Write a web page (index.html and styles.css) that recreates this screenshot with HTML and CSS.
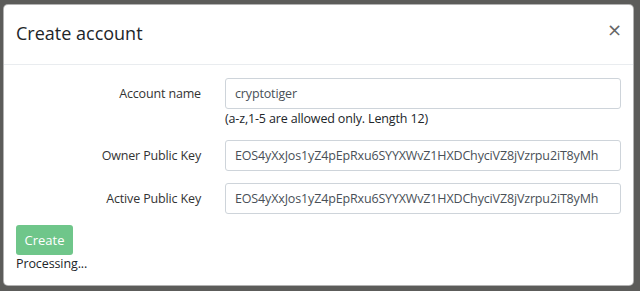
FILE: index.html
```html
<!DOCTYPE html>
<html>
<head>
<meta charset="utf-8">
<link rel="stylesheet" href="styles.css">
</head>
<body>
<div class="backdrop">
  <div class="modal">
    <div class="modal-header">
      <h5 class="modal-title">Create account</h5>
      <button class="close" type="button" aria-label="Close">×</button>
    </div>
    <div class="modal-body">
      <div class="form">
        <label class="label">Account name</label>
        <div class="field">
          <input class="input" type="text" value="cryptotiger">
          <div class="help">(a-z,1-5 are allowed only. Length 12)</div>
        </div>
        <label class="label">Owner Public Key</label>
        <div class="field">
          <input class="input" type="text" value="EOS4yXxJos1yZ4pEpRxu6SYYXWvZ1HXDChyciVZ8jVzrpu2iT8yMh">
        </div>
        <label class="label">Active Public Key</label>
        <div class="field">
          <input class="input" type="text" value="EOS4yXxJos1yZ4pEpRxu6SYYXWvZ1HXDChyciVZ8jVzrpu2iT8yMh">
        </div>
      </div>
      <button class="btn" type="button" disabled>Create</button>
      <div class="status">Processing...</div>
    </div>
  </div>
</div>
</body>
</html>
```
FILE: styles.css
```css
* { box-sizing: border-box; }
html, body { margin: 0; padding: 0; }
body {
  width: 640px;
  height: 291px;
  overflow: hidden;
  font-family: "Open Sans", "Noto Sans", sans-serif;
  color: #212529;
}
.backdrop {
  width: 640px;
  height: 291px;
  background: #5c5c5a;
  padding: 4px 0 0 3px;
}
.modal {
  width: 631px;
  height: 282px;
  background: #fff;
  border: 1px solid rgba(0,0,0,.3);
  border-radius: 5px;
  display: flex;
  flex-direction: column;
}
.modal-header {
  height: 60px;
  flex: none;
  display: flex;
  align-items: center;
  justify-content: space-between;
  padding: 0 12px 4px 12px;
  border-bottom: 1px solid #e9ecef;
}
.modal-title {
  margin: 0;
  font-size: 18px;
  font-weight: 400;
  line-height: 28px;
  color: #212529;
}
.close {
  background: none;
  border: 0;
  padding: 0;
  font-family: "DejaVu Sans", sans-serif;
  font-size: 18px;
  line-height: 20px;
  color: #666;
  margin-top: -6px;
  margin-right: -1px;
}
.modal-body {
  padding: 13px 12px 0 12px;
}
.form {
  display: grid;
  grid-template-columns: 185px 396px;
  column-gap: 24px;
  row-gap: 12px;
  align-items: start;
}
.label {
  text-align: right;
  font-size: 12.5px;
  letter-spacing: -0.15px;
  line-height: 31px;
  color: #333;
}
.field { display: flex; flex-direction: column; }
.input {
  height: 31px;
  width: 100%;
  border: 1px solid #ced4da;
  border-radius: 3px;
  padding: 0 9px;
  font-family: "Open Sans", "Noto Sans", sans-serif;
  font-size: 12.5px;
  letter-spacing: -0.15px;
  color: #495057;
  background: #fff;
}
.help {
  font-size: 12.5px;
  letter-spacing: -0.15px;
  line-height: 19px;
  color: #212529;
}
.btn {
  margin-top: 11px;
  height: 30px;
  width: 57px;
  border: 0;
  border-radius: 3px;
  background: #6fc68a;
  color: #fff;
  font-family: "Open Sans", "Noto Sans", sans-serif;
  font-size: 13px;
  padding: 0;
}
.status {
  font-size: 12.5px;
  letter-spacing: -0.1px;
  line-height: 18px;
  color: #212529;
}
```
